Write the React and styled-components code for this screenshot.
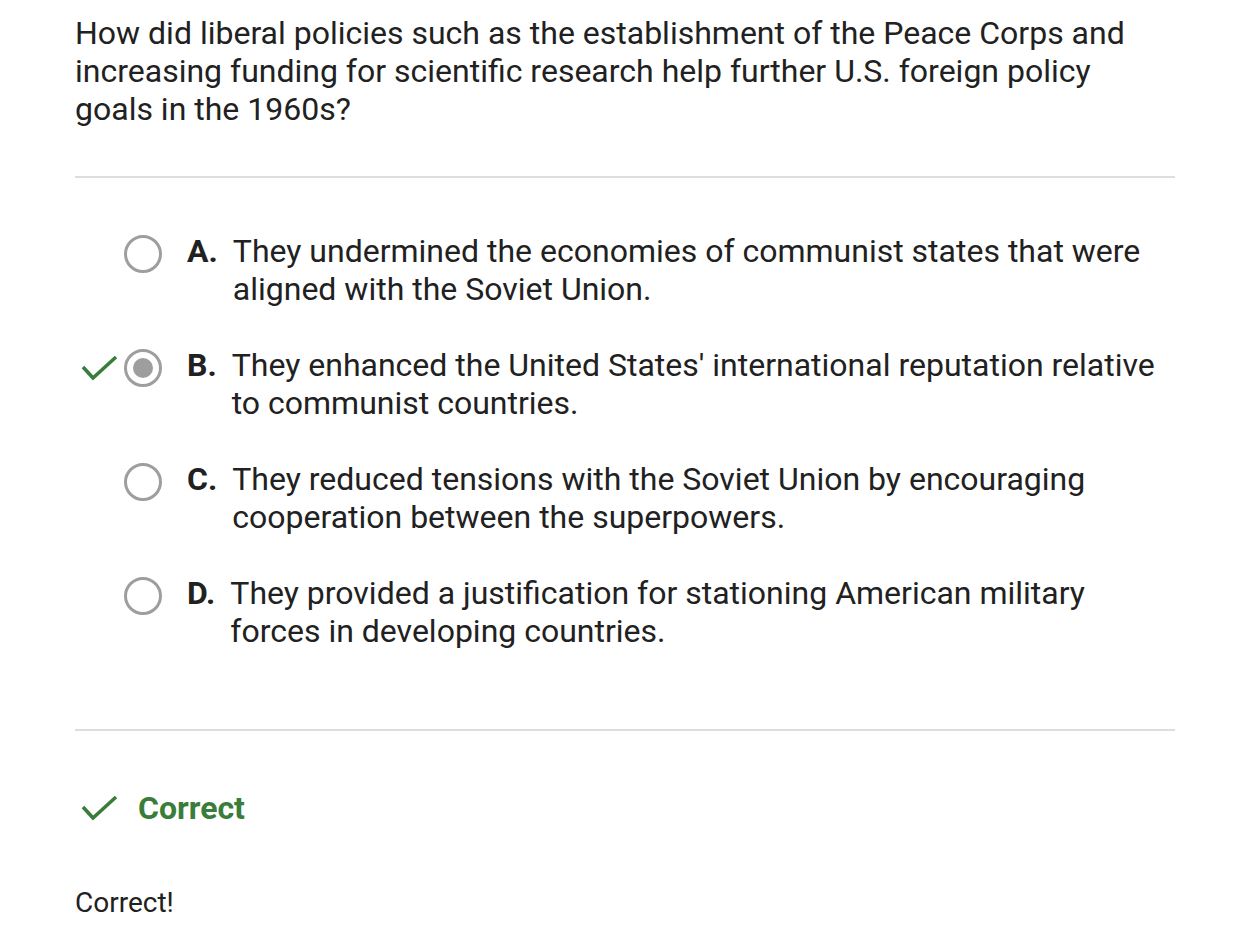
import React from "react";
import styled, { createGlobalStyle } from "styled-components";

const GlobalStyle = createGlobalStyle`
  body {
    margin: 0;
    background: #fff;
    font-family: Roboto, "Liberation Sans", sans-serif;
    color: #212121;
  }
`;

const options = [
  { letter: "A", text: "They undermined the economies of communist states that were aligned with the Soviet Union." },
  { letter: "B", text: "They enhanced the United States' international reputation relative to communist countries.", selected: true },
  { letter: "C", text: "They reduced tensions with the Soviet Union by encouraging cooperation between the superpowers." },
  { letter: "D", text: "They provided a justification for stationing American military forces in developing countries." },
];

function CheckMark() {
  return (
    <svg width="38" height="28" viewBox="0 0 38 28">
      <polyline
        points="3,13 13,24 36,3"
        fill="none"
        stroke="#3a7d3a"
        strokeWidth="3.6"
      />
    </svg>
  );
}

export default function App() {
  return (
    <Page>
      <GlobalStyle />
      <Question>
        How did liberal policies such as the establishment of the Peace Corps and
        increasing funding for scientific research help further U.S. foreign policy
        goals in the 1960s?
      </Question>
      <Rule $top={48} />
      <OptionList>
        {options.map((o) => (
          <Option key={o.letter}>
            <Mark>{o.selected && <CheckMark />}</Mark>
            <Radio $selected={o.selected} />
            <Letter>{o.letter}.</Letter>
            <OptionText>{o.text}</OptionText>
          </Option>
        ))}
      </OptionList>
      <Rule $top={79} />
      <Feedback>
        <CheckMark />
        <FeedbackTitle>Correct</FeedbackTitle>
      </Feedback>
      <Note>Correct!</Note>
    </Page>
  );
}

const Page = styled.div`
  width: 1100px;
  padding: 14px 0 0 75px;
`;

const Question = styled.p`
  margin: 0;
  font-size: 32px;
  line-height: 38px;
`;

const Rule = styled.hr`
  margin: ${(p) => p.$top}px 0 0;
  border: 0;
  height: 2px;
  background: #dddddd;
`;

const OptionList = styled.div`
  display: flex;
  flex-direction: column;
  gap: 38px;
  padding: 54px 0 0;
`;

const Option = styled.div`
  display: flex;
  align-items: flex-start;
  font-size: 32px;
  line-height: 38px;
`;

const Mark = styled.div`
  width: 49px;
  height: 44px;
  display: flex;
  align-items: center;
  padding-left: 5px;
  box-sizing: border-box;
`;

const Radio = styled.div`
  width: 38px;
  height: 38px;
  margin-top: 3px;
  box-sizing: border-box;
  border: 3px solid #9e9e9e;
  border-radius: 50%;
  display: flex;
  align-items: center;
  justify-content: center;
  flex-shrink: 0;
  &::after {
    content: "";
    display: ${(p) => (p.$selected ? "block" : "none")};
    width: 20px;
    height: 20px;
    border-radius: 50%;
    background: #9e9e9e;
  }
`;

const Letter = styled.span`
  font-weight: 700;
  margin-left: 25px;
  margin-right: 15px;
  flex-shrink: 0;
`;

const OptionText = styled.span`
  flex: 1;
`;

const Feedback = styled.div`
  display: flex;
  align-items: center;
  gap: 20px;
  margin-top: 58px;
  padding-left: 5px;
`;

const FeedbackTitle = styled.span`
  font-size: 32px;
  font-weight: 700;
  color: #3a7d3a;
`;

const Note = styled.p`
  margin: 60px 0 0;
  font-size: 28px;
  line-height: 32px;
`;
